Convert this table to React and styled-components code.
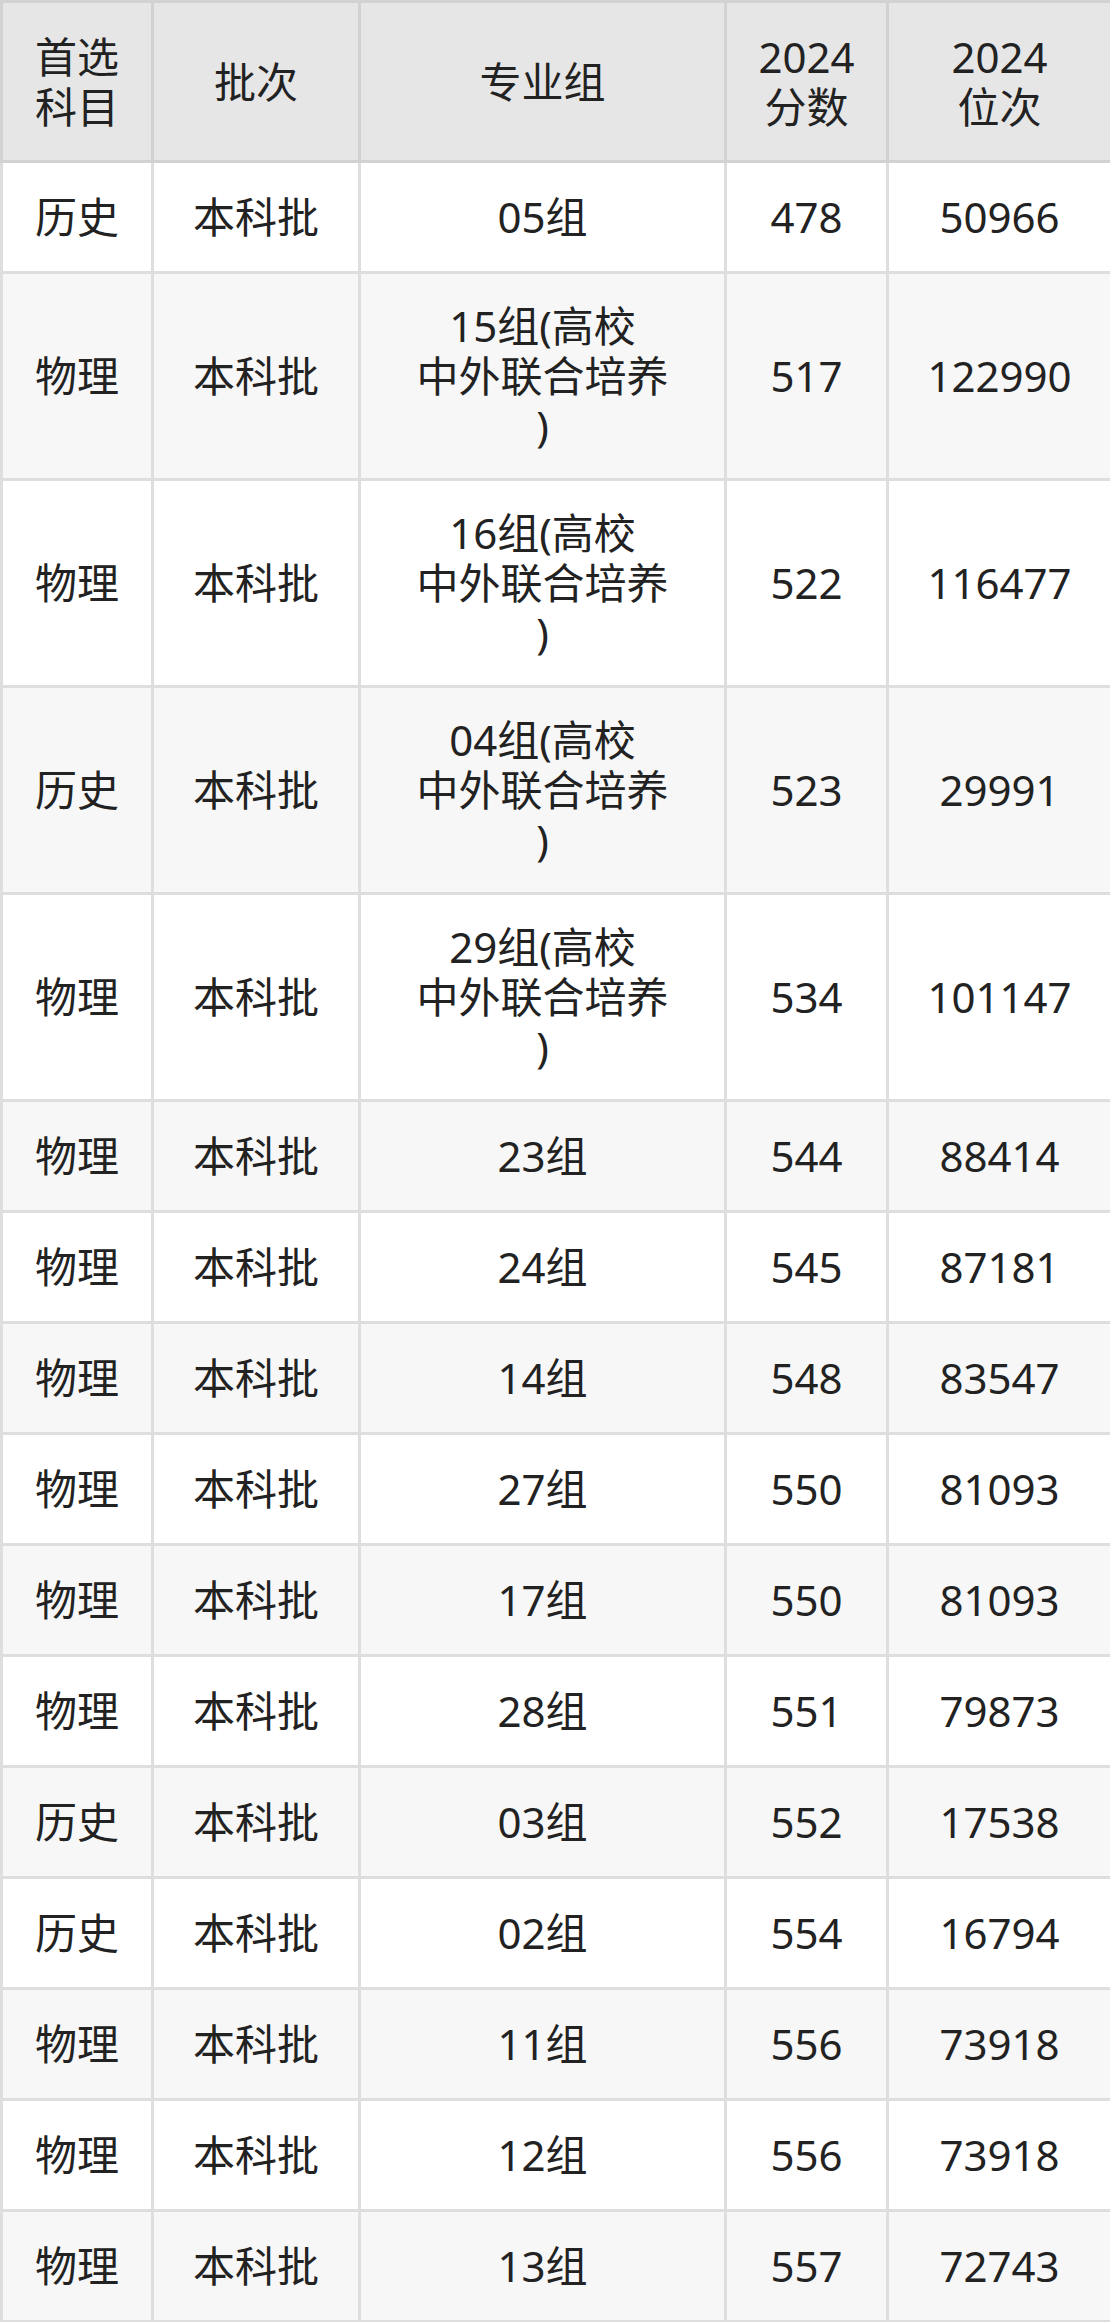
import React from 'react';
import styled, { createGlobalStyle } from 'styled-components';

const GlobalStyle = createGlobalStyle`
  body {
    margin: 0;
    background: #ffffff;
    font-family: "Noto Sans", "Noto Sans CJK SC", sans-serif;
  }
`;

const Table = styled.table`
  width: 1110px;
  table-layout: fixed;
  border-collapse: collapse;
  color: #222222;
  font-size: 42px;
  line-height: 50px;
  text-align: center;
`;

const HeadCell = styled.th`
  font-weight: 400;
  background: #e6e6e6;
  border: 3px solid #d2d2d2;
  height: 157px;
  padding: 0;
  vertical-align: middle;
`;

const Row = styled.tr`
  background: ${({ $even }) => ($even ? '#f7f7f7' : '#ffffff')};
`;

const Cell = styled.td`
  border: 3px solid #dedede;
  height: ${({ $tall }) => ($tall ? '204px' : '108px')};
  padding: 0;
  vertical-align: middle;
`;

const rows = [
  ['历史', '本科批', ['05组'], '478', '50966'],
  ['物理', '本科批', ['15组(高校', '中外联合培养', ')'], '517', '122990'],
  ['物理', '本科批', ['16组(高校', '中外联合培养', ')'], '522', '116477'],
  ['历史', '本科批', ['04组(高校', '中外联合培养', ')'], '523', '29991'],
  ['物理', '本科批', ['29组(高校', '中外联合培养', ')'], '534', '101147'],
  ['物理', '本科批', ['23组'], '544', '88414'],
  ['物理', '本科批', ['24组'], '545', '87181'],
  ['物理', '本科批', ['14组'], '548', '83547'],
  ['物理', '本科批', ['27组'], '550', '81093'],
  ['物理', '本科批', ['17组'], '550', '81093'],
  ['物理', '本科批', ['28组'], '551', '79873'],
  ['历史', '本科批', ['03组'], '552', '17538'],
  ['历史', '本科批', ['02组'], '554', '16794'],
  ['物理', '本科批', ['11组'], '556', '73918'],
  ['物理', '本科批', ['12组'], '556', '73918'],
  ['物理', '本科批', ['13组'], '557', '72743'],
];

const Lines = ({ lines }) =>
  lines.map((line, i) => (
    <React.Fragment key={i}>
      {i > 0 && <br />}
      {line}
    </React.Fragment>
  ));

export default function App() {
  return (
    <>
      <GlobalStyle />
      <Table>
        <colgroup>
          <col style={{ width: 151 }} />
          <col style={{ width: 207 }} />
          <col style={{ width: 366 }} />
          <col style={{ width: 162 }} />
          <col style={{ width: 224 }} />
        </colgroup>
        <thead>
          <tr>
            <HeadCell>首选<br />科目</HeadCell>
            <HeadCell>批次</HeadCell>
            <HeadCell>专业组</HeadCell>
            <HeadCell>2024<br />分数</HeadCell>
            <HeadCell>2024<br />位次</HeadCell>
          </tr>
        </thead>
        <tbody>
          {rows.map(([subject, batch, group, score, rank], index) => {
            const tall = group.length > 1;
            return (
              <Row key={index} $even={index % 2 === 1}>
                <Cell $tall={tall}>{subject}</Cell>
                <Cell $tall={tall}>{batch}</Cell>
                <Cell $tall={tall}><Lines lines={group} /></Cell>
                <Cell $tall={tall}>{score}</Cell>
                <Cell $tall={tall}>{rank}</Cell>
              </Row>
            );
          })}
        </tbody>
      </Table>
    </>
  );
}
